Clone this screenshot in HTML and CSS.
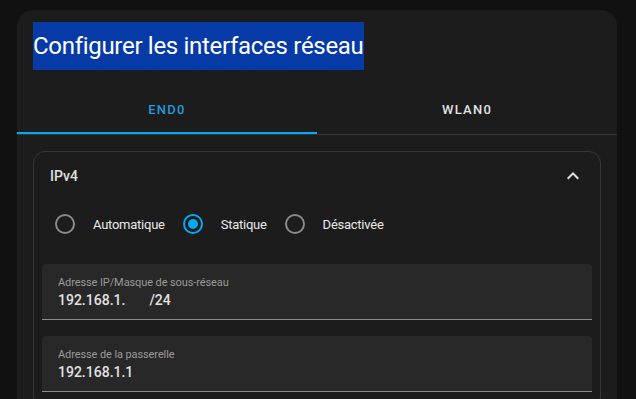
FILE: index.html
```html
<!DOCTYPE html>
<html lang="fr">
<head>
    <meta charset="UTF-8">
    <meta name="viewport" content="width=device-width, initial-scale=1.0">
    <title>Configurer les interfaces réseau</title>
    <link rel="stylesheet" href="styles.css">
</head>
<body>
    <div class="dialog">
        <h2 class="dialog-title"><span class="selected">Configurer les interfaces réseau</span></h2>
        <div class="tabs">
            <div class="tab active">end0</div>
            <div class="tab">wlan0</div>
        </div>
        <div class="dialog-content">
            <div class="expansion">
                <div class="expansion-header">
                    <span>IPv4</span>
                    <svg class="chevron" viewBox="0 0 24 24" width="24" height="24">
                        <path d="M7.41,15.41L12,10.83L16.59,15.41L18,14L12,8L6,14L7.41,15.41Z" fill="currentColor"/>
                    </svg>
                </div>
                <div class="radio-row">
                    <div class="radio"></div>
                    <span class="radio-label">Automatique</span>
                    <div class="radio checked"></div>
                    <span class="radio-label">Statique</span>
                    <div class="radio"></div>
                    <span class="radio-label">Désactivée</span>
                </div>
                <div class="field">
                    <div class="field-label">Adresse IP/Masque de sous-réseau</div>
                    <div class="field-value">192.168.1.<span class="octet"></span>/24</div>
                </div>
                <div class="field">
                    <div class="field-label">Adresse de la passerelle</div>
                    <div class="field-value">192.168.1.1</div>
                </div>
            </div>
        </div>
    </div>
</body>
</html>
```

FILE: styles.css
```css
body {
    margin: 0;
    background-color: #111111;
    font-family: Roboto, "Noto Sans", sans-serif;
    color: #e1e1e1;
    overflow: hidden;
}
.dialog {
    margin: 10px 19px 0 17px;
    min-height: 420px;
    background-color: #1c1c1c;
    border-radius: 16px 16px 0 0;
}
.dialog-title {
    margin: 0;
    padding: 12px 16px 0;
    font-size: 24px;
    font-weight: 400;
    letter-spacing: -0.3px;
    line-height: 48px;
    color: #ffffff;
}
.selected {
    display: inline-block;
    background-color: #063aa6;
}
.tabs {
    display: flex;
    margin-top: 16px;
    border-bottom: 1px solid #333333;
}
.tab {
    flex: 1;
    height: 48px;
    display: flex;
    justify-content: center;
    align-items: center;
    font-size: 13px;
    font-weight: 500;
    letter-spacing: 1.25px;
    text-transform: uppercase;
    color: #e1e1e1;
    box-sizing: border-box;
    border-bottom: 2px solid transparent;
}
.tab.active {
    color: #1f9bd9;
    border-bottom-color: #03a9f4;
}
.dialog-content {
    padding: 16px;
}
.expansion {
    border: 1px solid #363636;
    border-radius: 12px;
    padding: 0 8px 16px;
}
.expansion-header {
    height: 48px;
    display: flex;
    align-items: center;
    justify-content: space-between;
    padding: 0 7px 0 8px;
    font-size: 14px;
    font-weight: 500;
}
.chevron {
    color: #e1e1e1;
}
.radio-row {
    height: 48px;
    display: flex;
    align-items: center;
    padding-left: 13px;
    font-size: 13px;
    font-weight: 400;
}
.radio {
    width: 20px;
    height: 20px;
    box-sizing: border-box;
    border: 2px solid #8a8a8a;
    border-radius: 50%;
    margin-right: 18px;
    position: relative;
}
.radio.checked {
    border-color: #03a9f4;
}
.radio.checked::after {
    content: "";
    position: absolute;
    left: 3px;
    top: 3px;
    width: 10px;
    height: 10px;
    border-radius: 50%;
    background-color: #03a9f4;
}
.radio-label {
    margin-right: 18px;
    color: #e8e8e8;
    letter-spacing: -0.25px;
}
.field {
    margin-top: 16px;
    height: 56px;
    box-sizing: border-box;
    padding: 11px 16px 0;
    background-color: #282828;
    border-radius: 4px 4px 0 0;
    border-bottom: 1px solid #8c8c8c;
}
.field-label {
    font-size: 11px;
    line-height: 16px;
    color: #9a9a9a;
    letter-spacing: -0.1px;
}
.field-value {
    font-size: 14px;
    line-height: 18px;
    font-weight: 500;
    color: #e1e1e1;
}
.octet {
    display: inline-block;
    width: 24px;
}
```
